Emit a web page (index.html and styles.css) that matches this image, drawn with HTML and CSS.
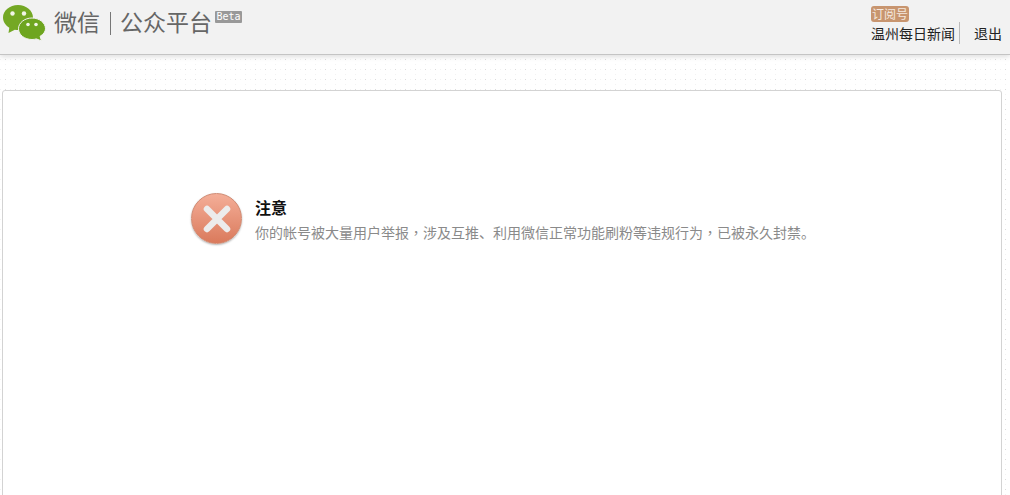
FILE: index.html
```html
<!DOCTYPE html>
<html lang="zh-CN">
<head>
<meta charset="utf-8">
<title>微信公众平台</title>
<link rel="stylesheet" href="styles.css">
</head>
<body>
<header class="topbar">
  <div class="brand">
    <svg class="logo" width="44" height="36" viewBox="0 0 44 36" aria-hidden="true">
      <path d="M15 0C6.700 0 0 5.600 0 12.500c0 4.200 2.500 7.900 6.300 10.200L5.500 28l6.300-3.200c1 .2 2.100.2 3.200.2 8.300 0 15-5.600 15-12.500S23.300 0 15 0z" fill="#74a824"/>
      <path d="M29 13c-7.300 0-13.500 4.700-13.500 10.800S21.700 34.500 29 34.500c1.500 0 3-.2 4.300-.6l5.200 2-1.400-4.600c3.300-2 5.400-4.600 5.400-7.500C42.500 17.700 36.300 13 29 13z" fill="#6ea51f" stroke="#f2f2f2" stroke-width="1"/>
      <circle cx="9.500" cy="8.500" r="2.200" fill="#f2f5e8"/>
      <circle cx="21" cy="8.500" r="2.200" fill="#f2f5e8"/>
      <circle cx="25" cy="19.500" r="1.800" fill="#f2f5e8"/>
      <circle cx="33" cy="19.500" r="1.800" fill="#f2f5e8"/>
    </svg>
    <span class="wordmark">微信</span>
    <span class="divider"></span>
    <span class="wordmark">公众平台</span>
    <span class="beta">Beta</span>
  </div>
  <div class="account">
    <div class="account-info">
      <span class="tag">订阅号</span>
      <span class="account-name">温州每日新闻</span>
    </div>
    <a class="logout">退出</a>
  </div>
</header>
<main class="page">
  <section class="card">
    <div class="notice">
      <div class="icon-error">
        <svg width="32" height="32" viewBox="0 0 32 32" aria-hidden="true">
          <path d="M6 6L26 26M26 6L6 26" stroke="#ececec" stroke-width="6.500" stroke-linecap="round" fill="none"/>
        </svg>
      </div>
      <div class="notice-text">
        <h2 class="notice-title">注意</h2>
        <p class="notice-desc">你的帐号被大量用户举报<span class="comma" lang="zh-TW">，</span>涉及互推、利用微信正常功能刷粉等违规行为<span class="comma" lang="zh-TW">，</span>已被永久封禁。</p>
      </div>
    </div>
  </section>
</main>
</body>
</html>
```
FILE: styles.css
```css
* { box-sizing: border-box; }
html, body { margin: 0; height: 100%; }
body {
  overflow: hidden;
  font-family: "Noto Sans CJK SC", "Liberation Sans", sans-serif;
  background-color: #fff;
  background-image:
    radial-gradient(circle at 5.500px 9.500px, #dcdcdc 0.600px, transparent 1px),
    radial-gradient(circle at 5.500px 4.500px, #f2f2f2 0.600px, transparent 1px),
    radial-gradient(circle at 0.500px 9.500px, #f2f2f2 0.600px, transparent 1px);
  background-size: 10px 10px;
}
.topbar {
  height: 55px;
  background: #f2f2f2;
  border-bottom: 1px solid #c4c4c4;
  box-shadow: 0 2px 5px rgba(0,0,0,.13);
  display: flex;
  justify-content: space-between;
  align-items: flex-start;
}
.brand { display: flex; align-items: flex-start; padding: 5px 0 0 3px; }
.logo { display: block; margin-right: 7px; }
.wordmark { font-size: 23px; line-height: 32px; color: #666; }
.divider { width: 1px; height: 23px; margin: 7px 9px 0 10px; background: #777; }
.beta {
  margin: 6px 0 0 3px;
  width: 27px;
  height: 12px;
  background: #999;
  color: #fff;
  text-align: center;
  font: 10px/12px "DejaVu Sans Mono", monospace;
  border-radius: 1px;
}
.account { display: flex; align-items: flex-start; padding: 6px 8px 0 0; }
.account-info { display: flex; flex-direction: column; align-items: flex-start; }
.tag {
  background: #c8956f;
  color: #f5e9df;
  font-size: 12px;
  line-height: 16px;
  height: 16px;
  padding: 0 1px;
  border-radius: 3px;
}
.account-name {
  padding-right: 4px;
  border-right: 1px solid #bbb;
  font-size: 14px;
  line-height: 22px;
  color: #222;
}
.logout { margin: 16px 0 0 14px; font-size: 14px; line-height: 22px; color: #222; }
.page { padding: 35px 8px 0 2px; }
.card {
  height: 500px;
  background: #fff;
  border: 1px solid #d3d3d3;
  border-radius: 3px;
  padding: 102px 0 0 188px;
}
.notice { display: flex; align-items: flex-start; }
.icon-error {
  width: 51px;
  height: 51px;
  border-radius: 50%;
  background: linear-gradient(#f4ae98, #da7a5c);
  border: 1px solid #cf8a72;
  box-shadow: 0 1px 2px rgba(0,0,0,.3);
  display: flex;
  align-items: center;
  justify-content: center;
  margin-right: 13px;
}
.notice-title { margin: 2px 0 0; font-size: 16px; line-height: 24px; font-weight: 700; color: #111; }
.notice-desc { margin: 3px 0 0; font-size: 14px; line-height: 20px; color: #8a8a8a; }
.comma { font-family: "Noto Sans CJK TC", sans-serif; }
```
